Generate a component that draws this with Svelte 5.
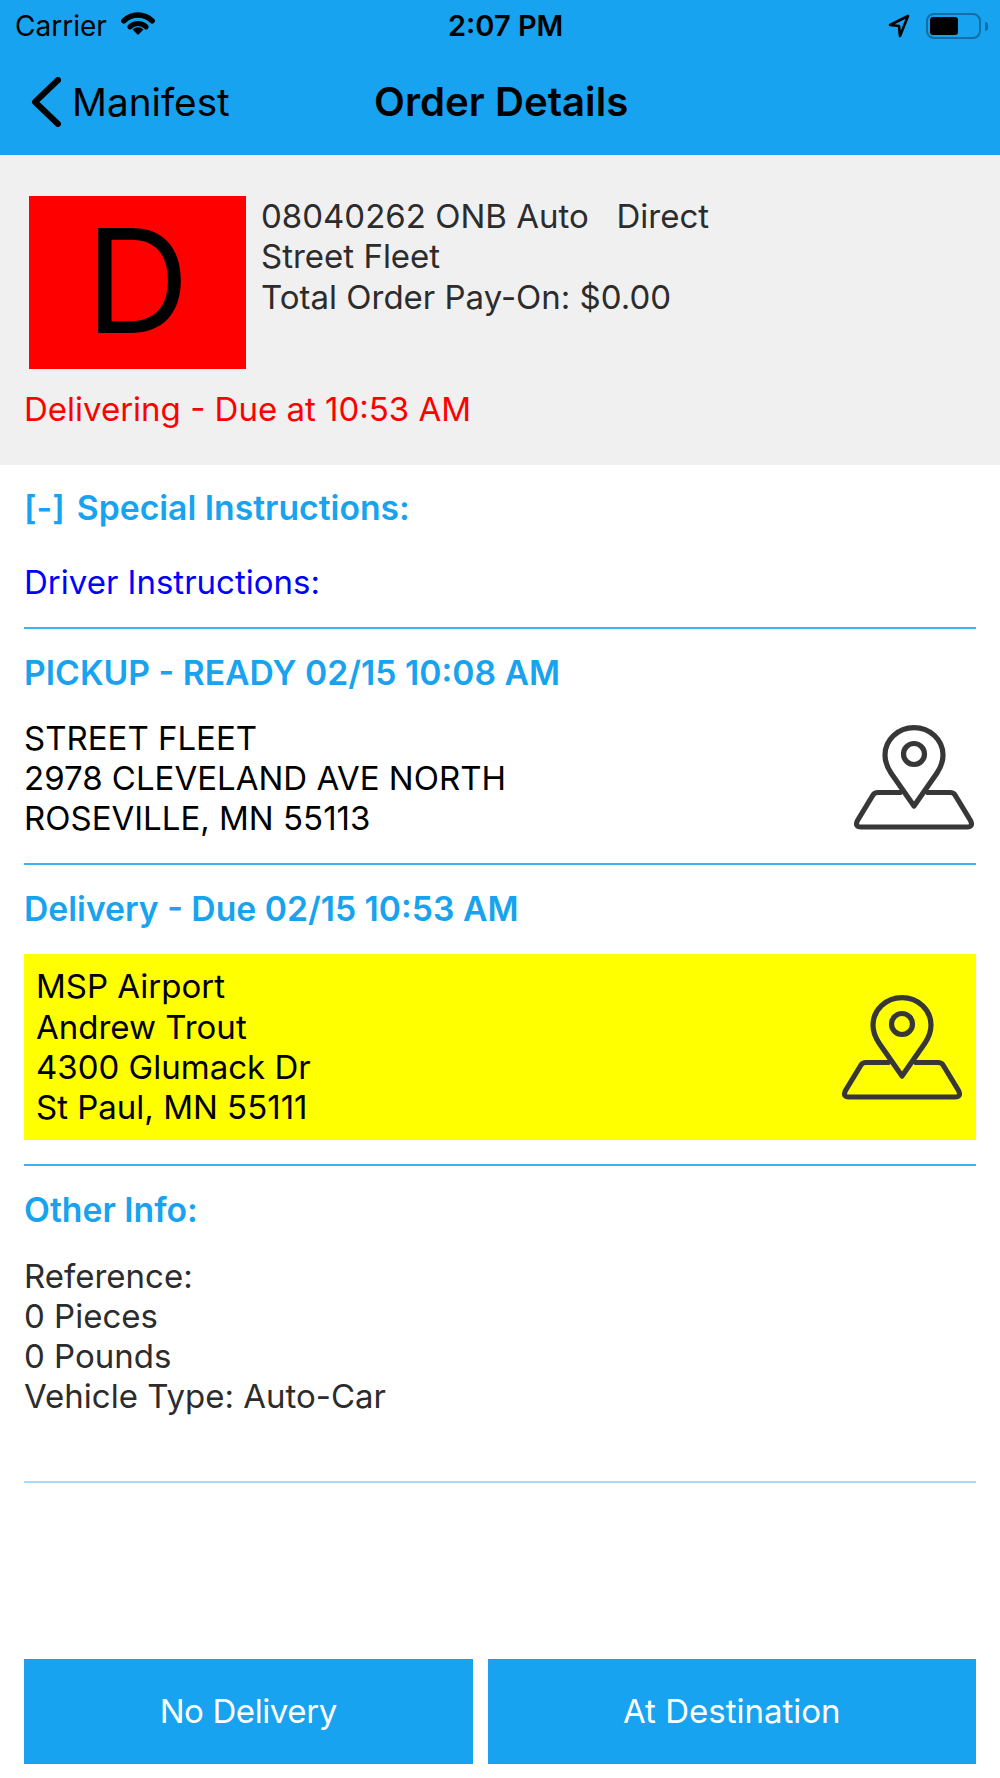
<script>
  const pickup = ['STREET FLEET', '2978 CLEVELAND AVE NORTH', 'ROSEVILLE, MN 55113'];
  const delivery = ['MSP Airport', 'Andrew Trout', '4300 Glumack Dr', 'St Paul, MN 55111'];
  const other = ['Reference:', '0 Pieces', '0 Pounds', 'Vehicle Type: Auto-Car'];
</script>

{#snippet mapPin()}
  <svg class="map-pin" viewBox="0 0 120 105" fill="none" stroke="#373737" stroke-width="5.2" stroke-linejoin="round" stroke-linecap="round">
    <path d="M60 81 L37 48 C33 42 31 37 31 30 A29 27.300 0 0 1 89 30 C89 37 87 42 83 48 Z" />
    <circle cx="60" cy="29" r="10.500" />
    <path d="M46 67.500 H24 Q20.500 67.500 19 70 L3.500 95.500 Q0.500 102 7 102 H113 Q119.500 102 116.500 95.500 L101 70 Q99.500 67.500 96 67.500 H74" />
  </svg>
{/snippet}

<div class="screen">
  <header class="top">
    <div class="status">
      <div class="status-left">
        <span>Carrier</span>
        <svg class="wifi" viewBox="0 0 34 23" fill="none" stroke="#000">
          <path d="M2.860 8.860 A20 20 0 0 1 31.140 8.860" stroke-width="5.500" stroke-linecap="round" />
          <path d="M8.870 14.870 A11.500 11.500 0 0 1 25.130 14.870" stroke-width="5" stroke-linecap="round" />
          <path d="M17 23 L11.500 17.500 A7.800 7.800 0 0 1 22.500 17.500 Z" fill="#000" stroke="none" />
        </svg>
      </div>
      <span class="clock">2:07 PM</span>
      <div class="status-right">
        <svg class="arrow" viewBox="0 0 22 24" fill="none" stroke="#000" stroke-width="2.600" stroke-linejoin="round">
          <path d="M20 2 L2 11 L11 12 L12 22 Z" />
        </svg>
        <div class="battery"><div class="battery-level"></div></div>
        <div class="battery-tip"></div>
      </div>
    </div>
    <div class="nav">
      <div class="back">
        <svg viewBox="0 0 30 50" fill="none" stroke="#000" stroke-width="6" stroke-linecap="round" stroke-linejoin="round">
          <path d="M27 3 L4 25 L27 47" />
        </svg>
        <span>Manifest</span>
      </div>
      <h1>Order Details</h1>
    </div>
  </header>

  <section class="summary">
    <div class="summary-row">
      <div class="badge">D</div>
      <div class="summary-text">
        <div>08040262 ONB Auto&nbsp;&nbsp; Direct</div>
        <div>Street Fleet</div>
        <div>Total Order Pay-On: $0.00</div>
      </div>
    </div>
    <div class="due">Delivering - Due at 10:53 AM</div>
  </section>

  <main class="content">
    <div class="special"><span>[-]</span><span>Special Instructions:</span></div>
    <div class="driver">Driver Instructions:</div>

    <div class="block pickup-block">
      <h2>PICKUP - READY 02/15 10:08 AM</h2>
      <div class="address">
        <div class="lines">
          {#each pickup as line}<div>{line}</div>{/each}
        </div>
        {@render mapPin()}
      </div>
    </div>

    <div class="block delivery-block">
      <h2>Delivery - Due 02/15 10:53 AM</h2>
      <div class="address highlight">
        <div class="lines">
          {#each delivery as line}<div>{line}</div>{/each}
        </div>
        {@render mapPin()}
      </div>
    </div>

    <div class="block other-block">
      <h2>Other Info:</h2>
      <div class="lines muted">
        {#each other as line}<div>{line}</div>{/each}
      </div>
    </div>
  </main>

  <footer class="actions">
    <button class="narrow">No Delivery</button>
    <button class="wide">At Destination</button>
  </footer>
</div>

<style>
  :global(body) {
    margin: 0;
    background: #fff;
  }

  .screen {
    width: 1000px;
    height: 1778px;
    display: flex;
    flex-direction: column;
    font-family: Inter, "Liberation Sans", sans-serif;
    font-size: 33px;
    line-height: 40.300px;
    overflow: hidden;
  }

  .top {
    background: #17a3ef;
    height: 155px;
    color: #000;
  }

  .status {
    height: 52px;
    padding: 0 12px 0 15px;
    display: grid;
    grid-template-columns: 433px 1fr auto;
    align-items: center;
    font-size: 28px;
  }

  .status-left,
  .status-right {
    display: flex;
    align-items: center;
  }

  .wifi {
    width: 34px;
    height: 23px;
    margin-left: 14px;
    margin-bottom: 4px;
  }

  .clock {
    font-size: 29px;
    font-weight: 600;
  }

  .arrow {
    width: 22px;
    height: 24px;
    margin-right: 16px;
  }

  .battery {
    width: 55px;
    height: 26px;
    border: 2px solid #0f6fa6;
    border-radius: 8px;
    padding: 2px;
    box-sizing: border-box;
  }

  .battery-level {
    width: 28px;
    height: 100%;
    background: #000;
    border-radius: 3px;
  }

  .battery-tip {
    width: 3px;
    height: 9px;
    margin-left: 4px;
    background: #0f6fa6;
    border-radius: 0 4px 4px 0;
  }

  .nav {
    height: 103px;
    box-sizing: border-box;
    padding: 0 0 3px 31px;
    display: grid;
    grid-template-columns: 343px auto;
    align-items: center;
  }

  .back {
    display: flex;
    align-items: center;
    gap: 11px;
    font-size: 38.700px;
  }

  .back svg {
    width: 30px;
    height: 50px;
  }

  h1 {
    margin: 0;
    font-size: 40.200px;
    line-height: 50px;
    font-weight: 600;
  }

  .summary {
    background: #f0f0f0;
    height: 310px;
    box-sizing: border-box;
    padding: 41px 24px 0;
    color: #2c2c2c;
  }

  .summary-row {
    display: flex;
    gap: 15px;
    margin-left: 5px;
  }

  .badge {
    width: 217px;
    height: 173px;
    background: #f00;
    color: #000;
    font-size: 144px;
    line-height: 170px;
    text-align: center;
  }

  .due {
    color: #f00;
    margin-top: 20px;
  }

  .content {
    flex: 1;
    padding: 0 24px;
  }

  .special {
    display: flex;
    gap: 12px;
    color: #17a3ef;
    font-weight: 600;
    font-size: 33.700px;
    line-height: 40px;
    padding-top: 23px;
  }

  .driver {
    color: #0000ff;
    line-height: 40px;
    margin-top: 34px;
    padding-bottom: 25px;
  }

  .block {
    border-top: 2px solid #3fb2f1;
    box-sizing: border-box;
  }

  h2 {
    margin: 0;
    padding-top: 24px;
    font-size: 33.700px;
    line-height: 40px;
    font-weight: 600;
    color: #17a3ef;
  }

  .pickup-block {
    height: 236px;
  }

  .delivery-block {
    height: 301px;
  }

  .other-block {
    height: 319px;
    border-bottom: 2px solid #a6dcf9;
  }

  .address {
    display: flex;
    align-items: center;
    justify-content: space-between;
    margin-top: 24.500px;
    padding-right: 2px;
    color: #000;
  }

  .highlight {
    background: #ff0;
    height: 186px;
    margin-top: 25px;
    padding: 0 14px 0 12px;
    line-height: 40.400px;
  }

  .map-pin {
    width: 120px;
    height: 105px;
    display: block;
  }

  .muted {
    color: #2c2c2c;
    margin-top: 25.500px;
  }

  .actions {
    display: flex;
    gap: 15px;
    padding: 0 24px 14px;
  }

  button {
    flex: 448 0 0;
    height: 105px;
    border: none;
    background: #17a3ef;
    color: #fff;
    font: inherit;
  }

  button.narrow {
    letter-spacing: -0.400px;
  }

  button.wide {
    flex: 489 0 0;
  }
</style>
